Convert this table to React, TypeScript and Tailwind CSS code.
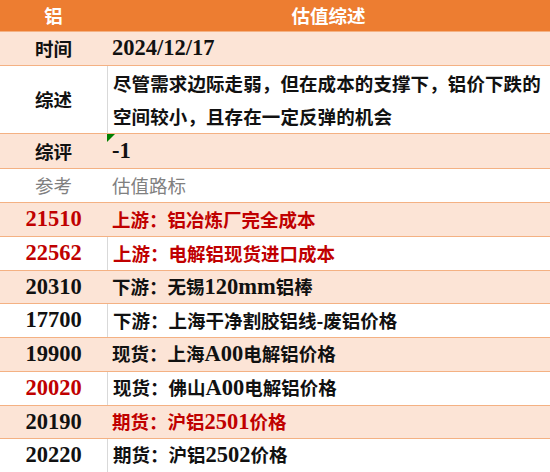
import React from "react";

const RED = "text-[#C00000]";

type Row = { num: string; label: string; text: React.ReactNode; numRed?: boolean; textRed?: boolean };

function N({ children }: { children: React.ReactNode }) {
  return <span className="font-['Liberation_Serif',serif] text-[22.5px] tracking-normal">{children}</span>;
}

const rows: Row[] = [
  { num: "21510", label: "上游：", text: "铝冶炼厂完全成本", numRed: true, textRed: true },
  { num: "22562", label: "上游：", text: "电解铝现货进口成本", numRed: true, textRed: true },
  { num: "20310", label: "下游：", text: <>无锡<N>120mm</N>铝棒</> },
  { num: "17700", label: "下游：", text: "上海干净割胶铝线-废铝价格" },
  { num: "19900", label: "现货：", text: <>上海<N>A00</N>电解铝价格</> },
  { num: "20020", label: "现货：", text: <>佛山<N>A00</N>电解铝价格</>, numRed: true },
  { num: "20190", label: "期货：", text: <>沪铝<N>2501</N>价格</>, textRed: true },
  { num: "20220", label: "期货：", text: <>沪铝<N>2502</N>价格</> },
];

function Line({ peach, h, left, children, divider = true, first }: {
  peach?: boolean; h: string; left: React.ReactNode; children: React.ReactNode; divider?: boolean; first?: string;
}) {
  return (
    <div className={`grid grid-cols-[107px_1fr] border-t border-[#F4B183] ${h} ${peach ? "bg-[#FCE4D6]" : "bg-white"}`}>
      <div className={`flex items-center justify-center ${first ?? ""}`}>{left}</div>
      <div className={`relative flex items-center pl-[5px] ${!peach && divider ? "border-l border-[#D9D9D9]" : ""}`}>
        {children}
      </div>
    </div>
  );
}

export default function App() {
  return (
    <div className="w-[550px] h-[472px] overflow-hidden bg-white font-['Noto_Sans_CJK_SC',sans-serif] font-bold text-[18.5px] text-[#111] leading-none">
      <div className="grid grid-cols-[107px_1fr] h-[31px] bg-[#ED7D31] text-white">
        <div className="flex items-center justify-center">铝</div>
        <div className="flex items-center justify-center">估值综述</div>
      </div>

      <Line peach h="h-[34px]" left="时间">
        <N>2024/12/17</N>
      </Line>

      <Line h="h-[68px]" left="综述">
        <div className="leading-[33px] tracking-[0.1px]">
          尽管需求边际走弱，但在成本的支撑下，铝价下跌的
          <br />
          空间较小，且存在一定反弹的机会
        </div>
      </Line>

      <Line peach h="h-[35px]" left="综评">
        <span className="absolute left-0 top-0 w-0 h-0 border-t-[8px] border-r-[8px] border-t-[#008000] border-r-transparent" />
        <N>-1</N>
      </Line>

      <Line h="h-[34px]" left="参考" divider={false} first="text-[#808080] font-normal">
        <span className="text-[#808080] font-normal">估值路标</span>
      </Line>

      {rows.map((r, i) => (
        <Line key={r.num} peach={i % 2 === 0} h="h-[33.75px]" left={<N>{r.num}</N>} first={r.numRed ? RED : ""}>
          <span className={r.textRed ? RED : ""}>
            {r.label}
            {r.text}
          </span>
        </Line>
      ))}
    </div>
  );
}
